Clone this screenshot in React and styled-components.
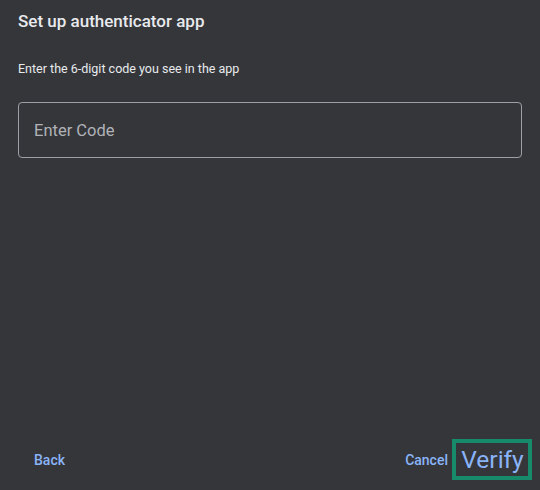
import React from "react";
import styled, { createGlobalStyle } from "styled-components";

const GlobalStyle = createGlobalStyle`
  html, body {
    margin: 0;
    padding: 0;
    background: #35363a;
  }
  * { box-sizing: border-box; }
`;

const Dialog = styled.div`
  width: 540px;
  height: 490px;
  background: #35363a;
  display: flex;
  flex-direction: column;
  font-family: Roboto, "Liberation Sans", Arial, sans-serif;
  color: #e8eaed;
`;

const Body = styled.div`
  flex: 1;
  display: flex;
  flex-direction: column;
  padding: 9px 18px 0 18px;
`;

const Title = styled.h1`
  margin: 0;
  font-size: 17px;
  line-height: 24px;
  font-weight: 500;
  color: #e8eaed;
`;

const Subtitle = styled.p`
  margin: 26px 0 0 0;
  font-size: 12.5px;
  line-height: 20px;
  font-weight: 400;
  color: #e8eaed;
`;

const CodeInput = styled.input`
  margin-top: 23px;
  width: 504px;
  height: 56px;
  border: 1px solid #9aa0a6;
  border-radius: 4px;
  background: transparent;
  padding: 0 15px;
  font-family: inherit;
  font-size: 16.5px;
  color: #e8eaed;
  outline: none;
  &::placeholder {
    color: #b0b3b7;
  }
`;

const Footer = styled.div`
  display: flex;
  align-items: center;
  justify-content: space-between;
  padding: 0 8px 10px 18px;
`;

const TextButton = styled.button`
  background: transparent;
  border: none;
  font-family: inherit;
  font-size: 14px;
  font-weight: 500;
  color: #8ab4f8;
  padding: ${(p) => p.$pad || "8px 16px"};
  cursor: pointer;
`;

const Actions = styled.div`
  display: flex;
  align-items: center;
  gap: 4px;
`;

const VerifyButton = styled.button`
  background: transparent;
  border: 4px solid #168a6b;
  font-family: inherit;
  font-size: 24.5px;
  font-weight: 400;
  line-height: 29px;
  color: #8ab4f8;
  padding: 2px 4px 2px 5px;
  width: 80px;
  height: 41px;
  cursor: pointer;
`;

export default function App() {
  return (
    <>
      <GlobalStyle />
      <Dialog>
        <Body>
          <Title>Set up authenticator app</Title>
          <Subtitle>Enter the 6-digit code you see in the app</Subtitle>
          <CodeInput placeholder="Enter Code" />
        </Body>
        <Footer>
          <TextButton>Back</TextButton>
          <Actions>
            <TextButton $pad="8px 0">Cancel</TextButton>
            <VerifyButton>Verify</VerifyButton>
          </Actions>
        </Footer>
      </Dialog>
    </>
  );
}
